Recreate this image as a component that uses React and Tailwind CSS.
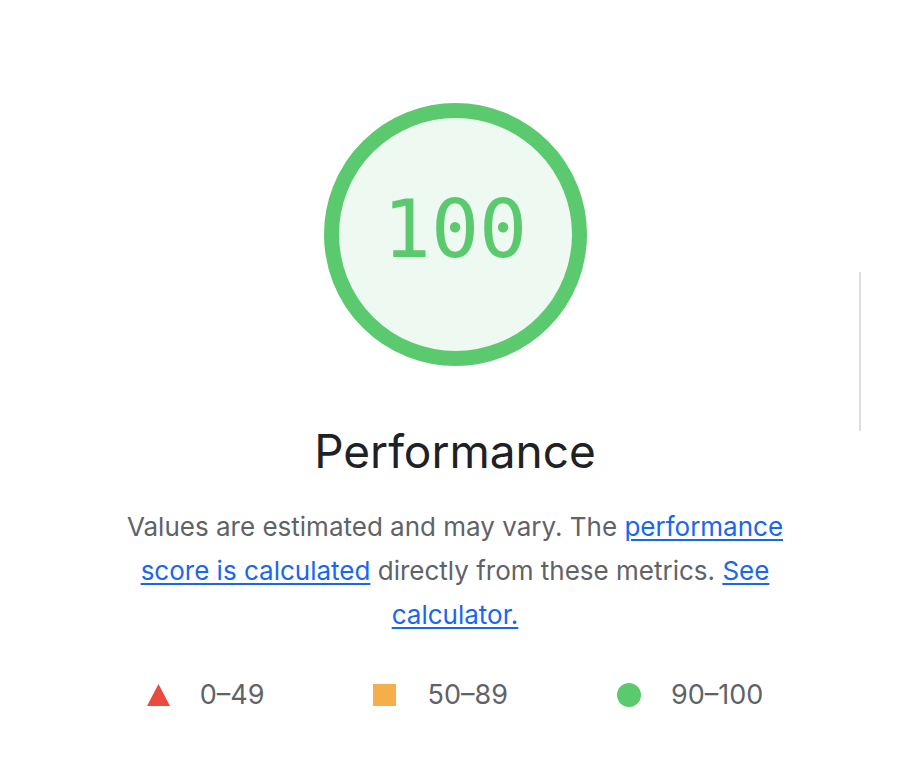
import React from "react";

export default function App() {
  return (
    <div className="relative w-[920px] h-[776px] bg-white overflow-hidden" style={{ fontFamily: "Inter, 'Liberation Sans', sans-serif" }}>
      <div className="absolute left-[859px] top-[272px] w-[2px] h-[159px] bg-[#dedede]" />
      <div className="w-[910px] flex flex-col items-center pt-[103px]">
        <div className="w-[263px] h-[263px] rounded-full border-[15px] border-[#5bc96e] bg-[#eefaf1] flex items-center justify-center">
          <span className="text-[80px] leading-none text-[#5bc96e] mt-[-10px]" style={{ fontFamily: "'DejaVu Sans Mono', monospace" }}>100</span>
        </div>
        <h1 className="mt-[57px] text-[46px] leading-[56px] text-[#202124]">Performance</h1>
        <p className="mt-[26px] w-[672px] text-center text-[26px] leading-[44px] text-[#5f6368]">
          Values are estimated and may vary. The{" "}
          <a href="#" className="text-[#1a66f0] underline underline-offset-[3px]">performance score is calculated</a>{" "}
          directly from these metrics.{" "}
          <a href="#" className="text-[#1a66f0] underline underline-offset-[3px]">See calculator.</a>
        </p>
        <div className="mt-[41px] flex items-center gap-[109px] text-[27px] leading-[34px] text-[#5f6368]">
          <div className="flex items-center gap-[30px]">
            <svg width="23" height="22" viewBox="0 0 23 22"><polygon points="11.5,0 23,22 0,22" fill="#eb4a3f" /></svg>
            <span>0–49</span>
          </div>
          <div className="flex items-center gap-[31px]">
            <div className="w-[23px] h-[22px] bg-[#f4ae4a]" />
            <span>50–89</span>
          </div>
          <div className="flex items-center gap-[30px]">
            <div className="w-[24px] h-[24px] rounded-full bg-[#5bc96e]" />
            <span>90–100</span>
          </div>
        </div>
      </div>
    </div>
  );
}
